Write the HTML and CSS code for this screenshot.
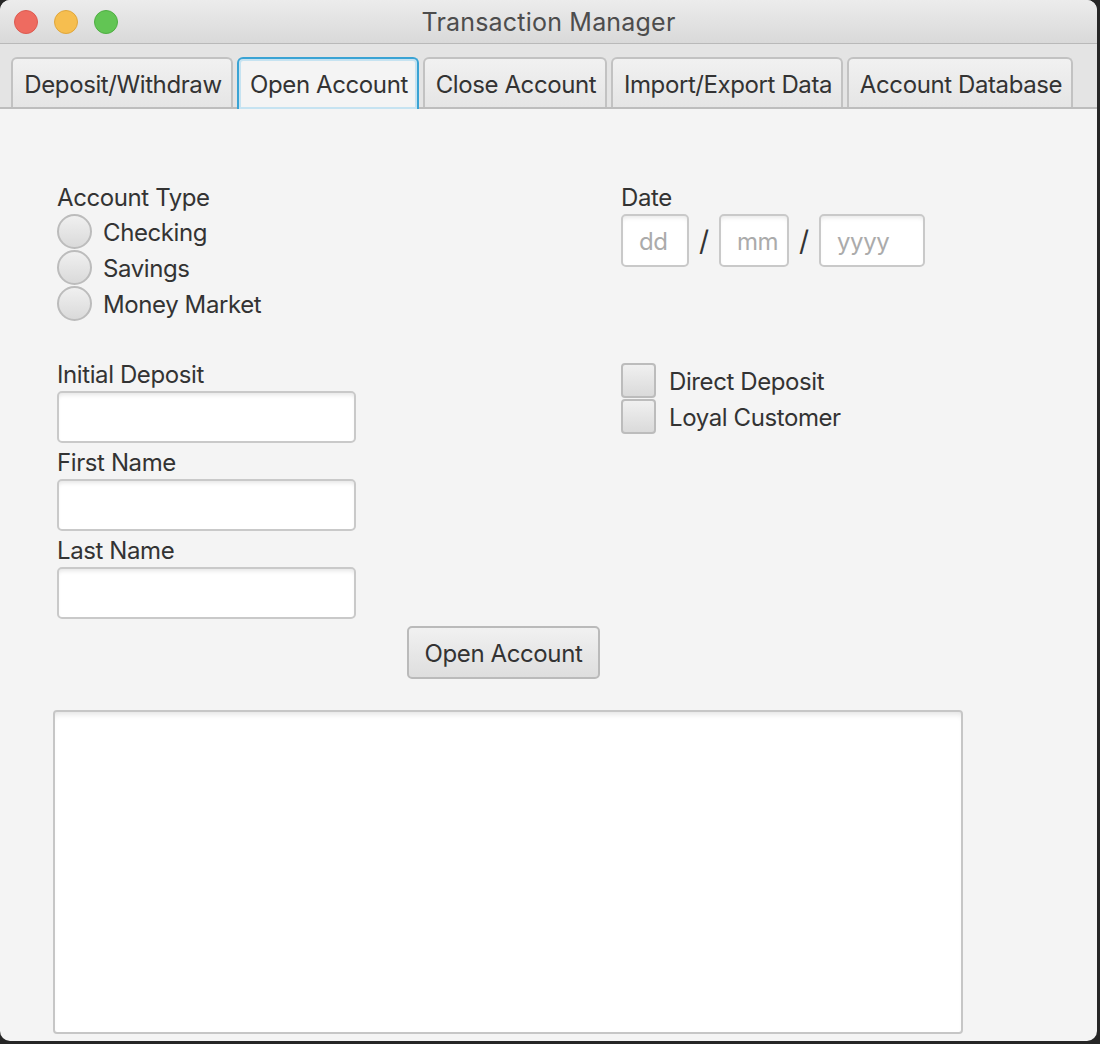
FILE: index.html
```html
<!DOCTYPE html>
<html>
<head>
<meta charset="utf-8">
<title>Transaction Manager</title>
<link rel="stylesheet" href="styles.css">
</head>
<body>
<div class="window">
  <div class="titlebar">
    <div class="lights">
      <span class="light red"></span>
      <span class="light yellow"></span>
      <span class="light green"></span>
    </div>
    <div class="title">Transaction Manager</div>
  </div>
  <div class="tabbar">
    <div class="tab tab-dw">Deposit/Withdraw</div>
    <div class="tab tab-open selected">Open Account</div>
    <div class="tab tab-close">Close Account</div>
    <div class="tab tab-io">Import/Export Data</div>
    <div class="tab tab-db">Account Database</div>
  </div>
  <div class="content">
    <div class="columns">
      <div class="col-left">
        <div class="label">Account Type</div>
        <div class="choice"><span class="radio"></span><span class="choice-text">Checking</span></div>
        <div class="choice"><span class="radio"></span><span class="choice-text">Savings</span></div>
        <div class="choice"><span class="radio"></span><span class="choice-text">Money Market</span></div>
        <div class="label label-gap">Initial Deposit</div>
        <div class="field"></div>
        <div class="label">First Name</div>
        <div class="field"></div>
        <div class="label">Last Name</div>
        <div class="field"></div>
      </div>
      <div class="col-right">
        <div class="label">Date</div>
        <div class="date-row">
          <div class="dfield w-dd">dd</div>
          <span class="slash">/</span>
          <div class="dfield w-mm">mm</div>
          <span class="slash">/</span>
          <div class="dfield w-yyyy">yyyy</div>
        </div>
        <div class="checks">
          <div class="choice"><span class="checkbox"></span><span class="check-text">Direct Deposit</span></div>
          <div class="choice"><span class="checkbox"></span><span class="check-text">Loyal Customer</span></div>
        </div>
      </div>
    </div>
    <div class="button-row">
      <div class="button">Open Account</div>
    </div>
    <div class="textarea"></div>
  </div>
</div>
</body>
</html>
```
FILE: styles.css
```css
html, body {
  margin: 0;
  padding: 0;
  background: #262626;
}
body {
  font-family: Inter, "Open Sans", "Liberation Sans", sans-serif;
  color: #333333;
}
.window {
  width: 1097px;
  height: 1041px;
  background: #f4f4f4;
  border-radius: 10px;
  overflow: hidden;
  display: flex;
  flex-direction: column;
}
.titlebar {
  height: 43px;
  flex: none;
  background: linear-gradient(#ececec, #d9d9d9);
  border-bottom: 1px solid #b9b9b9;
  display: flex;
  align-items: center;
  justify-content: center;
  position: relative;
}
.lights {
  position: absolute;
  left: 14px;
  top: 10px;
  display: flex;
  gap: 16px;
}
.light {
  width: 24px;
  height: 24px;
  border-radius: 50%;
  box-sizing: border-box;
}
.red { background: #ee6b60; border: 1px solid #dc5a50; }
.yellow { background: #f6be4f; border: 1px solid #dfa63c; }
.green { background: #62c554; border: 1px solid #4fae43; }
.title {
  font-size: 25px;
  color: #4d4d4d;
  letter-spacing: 0.2px;
  margin-top: 1px;
}
.tabbar {
  flex: none;
  height: 65px;
  box-sizing: border-box;
  background: #e4e4e4;
  border-bottom: 2px solid #bdbdbd;
  padding: 13px 0 0 11px;
  display: flex;
  align-items: flex-end;
  gap: 4px;
}
.tab {
  flex: none;
  height: 50px;
  box-sizing: border-box;
  padding: 3px 0 0 2px;
  display: flex;
  align-items: center;
  justify-content: center;
  white-space: nowrap;
  font-size: 24px;
  color: #333;
  background: linear-gradient(#f1f1f1, #e5e5e5);
  border: 2px solid #c2c2c2;
  border-bottom: none;
  border-radius: 6px 6px 0 0;
  letter-spacing: -0.4px;
}
.tab-dw { width: 222px; }
.tab-open { width: 182px; }
.tab-close { width: 184px; }
.tab-io { width: 232px; }
.tab-db { width: 226px; }
.tab.selected {
  height: 52px;
  margin-bottom: -2px;
  padding: 1px 0 0 2px;
  background: #f4f4f4;
  border: 2px solid #3aa3d4;
  border-bottom: none;
  box-shadow: inset 0 0 0 2px #c6e3f1;
}
.content {
  flex: 1;
  padding: 72px 0 0 57px;
  display: flex;
  flex-direction: column;
}
.columns {
  display: flex;
}
.col-left {
  width: 564px;
  flex: none;
  display: flex;
  flex-direction: column;
}
.col-right {
  display: flex;
  flex-direction: column;
}
.label {
  font-size: 24px;
  line-height: 30px;
  height: 30px;
  box-sizing: border-box;
  padding-top: 2px;
  letter-spacing: -0.4px;
}
.label-gap {
  margin-top: 37px;
}
.choice {
  display: flex;
  align-items: center;
  height: 36px;
  font-size: 24px;
  letter-spacing: -0.4px;
}
.col-left .label + .choice {
  margin-top: 2px;
}
.radio {
  width: 35px;
  height: 35px;
  box-sizing: border-box;
  border-radius: 50%;
  border: 2px solid #bcbcbc;
  background: linear-gradient(#f0f0f0, #dadada);
  flex: none;
}
.choice-text {
  margin-left: 11px;
  padding-top: 2px;
}
.field {
  width: 299px;
  height: 52px;
  box-sizing: border-box;
  margin: 3px 0;
  border: 2px solid #c9c9c9;
  border-radius: 5px;
  background: #fff;
  box-shadow: inset 0 4px 4px -2px #e6e6e6;
}
.date-row {
  display: flex;
  align-items: center;
  margin-top: 3px;
}
.dfield {
  height: 53px;
  box-sizing: border-box;
  border: 2px solid #c9c9c9;
  border-radius: 5px;
  background: #fff;
  box-shadow: inset 0 4px 4px -2px #e9e9e9;
  font-size: 24px;
  color: #ababab;
  display: flex;
  align-items: center;
  padding: 2px 0 0 16px;
  overflow: hidden;
  white-space: nowrap;
  letter-spacing: -0.4px;
}
.w-dd { width: 68px; }
.w-mm { width: 70px; }
.w-yyyy { width: 106px; }
.slash {
  width: 30px;
  text-align: center;
  font-size: 28px;
  color: #333;
}
.checks {
  margin-top: 95px;
  display: flex;
  flex-direction: column;
}
.checkbox {
  width: 35px;
  height: 35px;
  box-sizing: border-box;
  border: 2px solid #bcbcbc;
  border-radius: 4px;
  background: linear-gradient(#f0f0f0, #dadada);
  flex: none;
}
.check-text {
  margin-left: 13px;
  padding-top: 2px;
}
.button-row {
  display: flex;
  margin-top: 4px;
  padding-left: 350px;
}
.button {
  width: 193px;
  height: 53px;
  box-sizing: border-box;
  padding-top: 2px;
  border: 2px solid #bababa;
  border-radius: 5px;
  background: linear-gradient(#f1f1f1, #dedede);
  display: flex;
  align-items: center;
  justify-content: center;
  font-size: 24px;
  letter-spacing: -0.4px;
}
.textarea {
  margin-top: 31px;
  margin-left: -4px;
  width: 910px;
  height: 324px;
  box-sizing: border-box;
  border: 2px solid #c6c6c6;
  border-radius: 4px;
  background: #fff;
  box-shadow: inset 0 6px 6px -4px #e0e0e0;
}
```
